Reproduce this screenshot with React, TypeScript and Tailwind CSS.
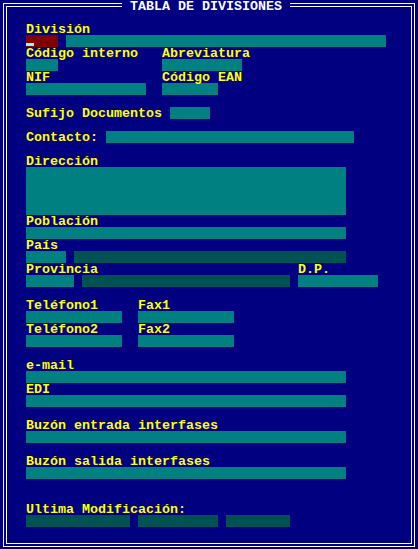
import React from "react";

// DOS-style data entry screen: 8px character cells, 12px rows
const font = "font-['Liberation_Mono',monospace] font-bold text-[13.33px] leading-[12px]";

function Row({ children, className = "" }: { children?: React.ReactNode; className?: string }) {
  return <div className={`flex h-[12px] items-stretch ${className}`}>{children}</div>;
}

function Label({ text, className = "" }: { text: string; className?: string }) {
  return <span className={`relative top-[1px] whitespace-pre text-[#ffff00] ${className}`}>{text}</span>;
}

function Field({ w, dark, className = "" }: { w: string; dark?: boolean; className?: string }) {
  return <div className={`${w} ${dark ? "bg-[#005252]" : "bg-[#008080]"} ${className}`} />;
}

export default function App() {
  return (
    <div className={`relative h-[549px] w-[418px] bg-[#000080] pl-[3px] pr-[3px] pt-[3px] pb-[2px] ${font}`}>
      <div className="h-full border border-white p-[2px]">
        <div className="h-full border border-white pl-[19px] pt-[16px]">
          <Row>
            <Label text="División" />
          </Row>
          <Row>
            <div className="relative w-[32px] bg-[#800000]">
              {/* text cursor */}
              <div className="absolute bottom-[1px] left-0 h-[3px] w-[8px] bg-[#80ffff]" />
            </div>
            <Field w="w-[320px]" className="ml-[8px]" />
          </Row>
          <Row>
            <Label text="Código interno" className="w-[136px]" />
            <Label text="Abreviatura" />
          </Row>
          <Row>
            <Field w="w-[32px]" />
            <Field w="w-[80px]" className="ml-[104px]" />
          </Row>
          <Row>
            <Label text="NIF" className="w-[136px]" />
            <Label text="Código EAN" />
          </Row>
          <Row>
            <Field w="w-[120px]" />
            <Field w="w-[56px]" className="ml-[16px]" />
          </Row>
          <Row />
          <Row>
            <Label text="Sufijo Documentos" className="w-[144px]" />
            <Field w="w-[40px]" />
          </Row>
          <Row />
          <Row>
            <Label text="Contacto:" className="w-[80px]" />
            <Field w="w-[248px]" />
          </Row>
          <Row />
          <Row>
            <Label text="Dirección" />
          </Row>
          <div className="h-[48px] w-[320px] bg-[#008080]" />
          <Row>
            <Label text="Población" />
          </Row>
          <Row>
            <Field w="w-[320px]" />
          </Row>
          <Row>
            <Label text="País" />
          </Row>
          <Row>
            <Field w="w-[40px]" />
            <Field w="w-[272px]" dark className="ml-[8px]" />
          </Row>
          <Row>
            <Label text="Provincia" className="w-[272px]" />
            <Label text="D.P." />
          </Row>
          <Row>
            <Field w="w-[48px]" />
            <Field w="w-[208px]" dark className="ml-[8px]" />
            <Field w="w-[80px]" className="ml-[8px]" />
          </Row>
          <Row />
          <Row>
            <Label text="Teléfono1" className="w-[112px]" />
            <Label text="Fax1" />
          </Row>
          <Row>
            <Field w="w-[96px]" />
            <Field w="w-[96px]" className="ml-[16px]" />
          </Row>
          <Row>
            <Label text="Teléfono2" className="w-[112px]" />
            <Label text="Fax2" />
          </Row>
          <Row>
            <Field w="w-[96px]" />
            <Field w="w-[96px]" className="ml-[16px]" />
          </Row>
          <Row />
          <Row>
            <Label text="e-mail" />
          </Row>
          <Row>
            <Field w="w-[320px]" />
          </Row>
          <Row>
            <Label text="EDI" />
          </Row>
          <Row>
            <Field w="w-[320px]" />
          </Row>
          <Row />
          <Row>
            <Label text="Buzón entrada interfases" />
          </Row>
          <Row>
            <Field w="w-[320px]" />
          </Row>
          <Row />
          <Row>
            <Label text="Buzón salida interfases" />
          </Row>
          <Row>
            <Field w="w-[320px]" />
          </Row>
          <Row />
          <Row />
          <Row>
            <Label text="Ultima Modificación:" />
          </Row>
          <Row>
            <Field w="w-[104px]" dark />
            <Field w="w-[80px]" dark className="ml-[8px]" />
            <Field w="w-[64px]" dark className="ml-[8px]" />
          </Row>
        </div>
      </div>
      {/* title sits over the double frame */}
      <div className="absolute left-[122px] top-0 h-[11px] whitespace-pre bg-[#000080] text-white leading-[13px]">
        {" TABLA DE DIVISIONES "}
      </div>
    </div>
  );
}
